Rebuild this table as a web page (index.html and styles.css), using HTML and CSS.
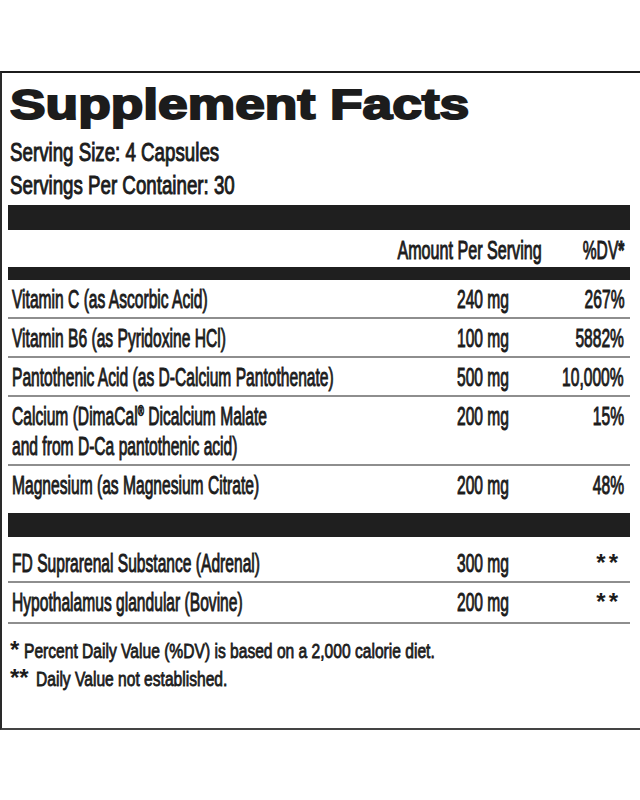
FILE: index.html
```html
<!DOCTYPE html>
<html lang="en">
<head>
<meta charset="utf-8">
<title>Supplement Facts</title>
<link rel="stylesheet" href="styles.css">
</head>
<body>
<section class="label">
  <h1 class="title"><span class="title-text">Supplement Facts</span></h1>

  <div class="serving">
    <div class="serving-line"><span class="sq-s">Serving Size: 4 Capsules</span></div>
    <div class="serving-line"><span class="sq-s">Servings Per Container: 30</span></div>
  </div>

  <div class="table">
    <div class="bar bar-top"></div>
    <div class="head">
      <div class="cell-right"><span class="sq-r head-amt">Amount Per Serving</span></div>
      <div class="cell-right"><span class="sq-r">%DV<b class="head-star">*</b></span></div>
    </div>
    <div class="bar bar-thin"></div>

    <div class="group">
      <div class="row">
        <div class="name"><span class="sq">Vitamin C (as Ascorbic Acid)</span></div>
        <div class="amt"><span class="sq">240 mg</span></div>
        <div class="dv"><span class="sq-r">267%</span></div>
      </div>
      <div class="row">
        <div class="name"><span class="sq">Vitamin B6 (as Pyridoxine HCl)</span></div>
        <div class="amt"><span class="sq">100 mg</span></div>
        <div class="dv"><span class="sq-r">5882%</span></div>
      </div>
      <div class="row">
        <div class="name"><span class="sq">Pantothenic Acid (as D-Calcium Pantothenate)</span></div>
        <div class="amt"><span class="sq">500 mg</span></div>
        <div class="dv"><span class="sq-r">10,000%</span></div>
      </div>
      <div class="row">
        <div class="name"><span class="sq">Calcium (DimaCal<sup class="reg">®</sup> Dicalcium Malate<br>and from D-Ca pantothenic acid)</span></div>
        <div class="amt"><span class="sq">200 mg</span></div>
        <div class="dv"><span class="sq-r">15%</span></div>
      </div>
      <div class="row row-last">
        <div class="name"><span class="sq">Magnesium (as Magnesium Citrate)</span></div>
        <div class="amt"><span class="sq">200 mg</span></div>
        <div class="dv"><span class="sq-r">48%</span></div>
      </div>
    </div>

    <div class="bar bar-mid"></div>

    <div class="group group-2">
      <div class="row">
        <div class="name"><span class="sq">FD Suprarenal Substance (Adrenal)</span></div>
        <div class="amt"><span class="sq">300 mg</span></div>
        <div class="dv"><b class="stars">**</b></div>
      </div>
      <div class="row row-end">
        <div class="name"><span class="sq">Hypothalamus glandular (Bovine)</span></div>
        <div class="amt"><span class="sq">200 mg</span></div>
        <div class="dv"><b class="stars">**</b></div>
      </div>
    </div>
  </div>

  <div class="notes">
    <p class="note"><b class="ast">*</b><span class="sq-n">Percent Daily Value (%DV) is based on a 2,000 calorie diet.</span></p>
    <p class="note"><b class="ast">**</b><span class="sq-n note-2">Daily Value not established.</span></p>
  </div>
</section>
</body>
</html>
```

FILE: styles.css
```css
html, body {
  margin: 0;
  padding: 0;
  background: #ffffff;
}

body {
  width: 640px;
  font-family: "Liberation Sans", Arial, sans-serif;
  color: #1c1c1c;
}

.label {
  margin-top: 71px;
  border-top: 2px solid #1c1c1c;
  border-left: 2px solid #2a2a2a;
  border-bottom: 2px solid #444444;
  padding-bottom: 35px;
}

/* Title */
.title {
  margin: 7px 0 0 8px;
  font-size: 43px;
  line-height: 48px;
  font-weight: 700;
  white-space: nowrap;
}

.title-text {
  display: inline-block;
  transform: scaleX(1.24);
  transform-origin: left center;
  -webkit-text-stroke: 2px #1c1c1c;
}

/* Serving */
.serving {
  margin: 8px 0 0 8px;
  font-size: 26px;
  line-height: 33px;
}

.sq-s {
  display: inline-block;
  white-space: nowrap;
  transform: scaleX(0.72);
  transform-origin: left center;
  -webkit-text-stroke: 1px #1c1c1c;
}

/* Condensed text helpers */
.sq,
.sq-r {
  display: inline-block;
  white-space: nowrap;
  transform: scaleX(0.6);
  -webkit-text-stroke: 1px #1c1c1c;
}

.sq { transform-origin: left center; }
.sq-r { transform-origin: right center; }

.head-amt { transform: scaleX(0.62); }

/* Table */
.table {
  margin: 3px 0 0 6px;
  width: 622px;
  font-size: 26px;
  line-height: 30px;
}

.bar {
  background: #1f1f1f;
}

.bar-top { height: 25px; }
.bar-thin { height: 13px; }
.bar-mid { height: 24px; }

.head {
  display: grid;
  grid-template-columns: 1fr 82px;
  padding: 5px 6px 2px 0;
}

.cell-right {
  display: flex;
  justify-content: flex-end;
}

.head-star {
  font-weight: 700;
}

.row {
  display: grid;
  grid-template-columns: 449px 90px 77px;
  padding: 4px 6px 3px 0;
  border-top: 2px solid #8e8e8e;
}

.group .row:first-child { border-top: none; }

.row-last { padding-bottom: 13px; }

.group-2 .row:first-child { padding-top: 11px; }

.row-end {
  padding-bottom: 5px;
  border-bottom: 2px solid #8e8e8e;
}

.name { padding-left: 4px; }

.dv {
  display: flex;
  justify-content: flex-end;
  align-items: baseline;
}

.reg {
  font-size: 14px;
  line-height: 0;
  vertical-align: 9px;
}

.stars {
  font-size: 24px;
  letter-spacing: 3px;
  padding-right: 3px;
}

/* Notes */
.notes {
  margin: 13px 0 0 8px;
}

.note {
  margin: 0;
  font-size: 20px;
  line-height: 28px;
  white-space: nowrap;
}

.ast {
  font-size: 24px;
  line-height: 0;
  margin-right: 5px;
}

.sq-n {
  display: inline-block;
  transform: scaleX(0.78);
  transform-origin: left center;
  -webkit-text-stroke: 0.8px #1c1c1c;
}

.note-2 { margin-left: 2px; }
```
